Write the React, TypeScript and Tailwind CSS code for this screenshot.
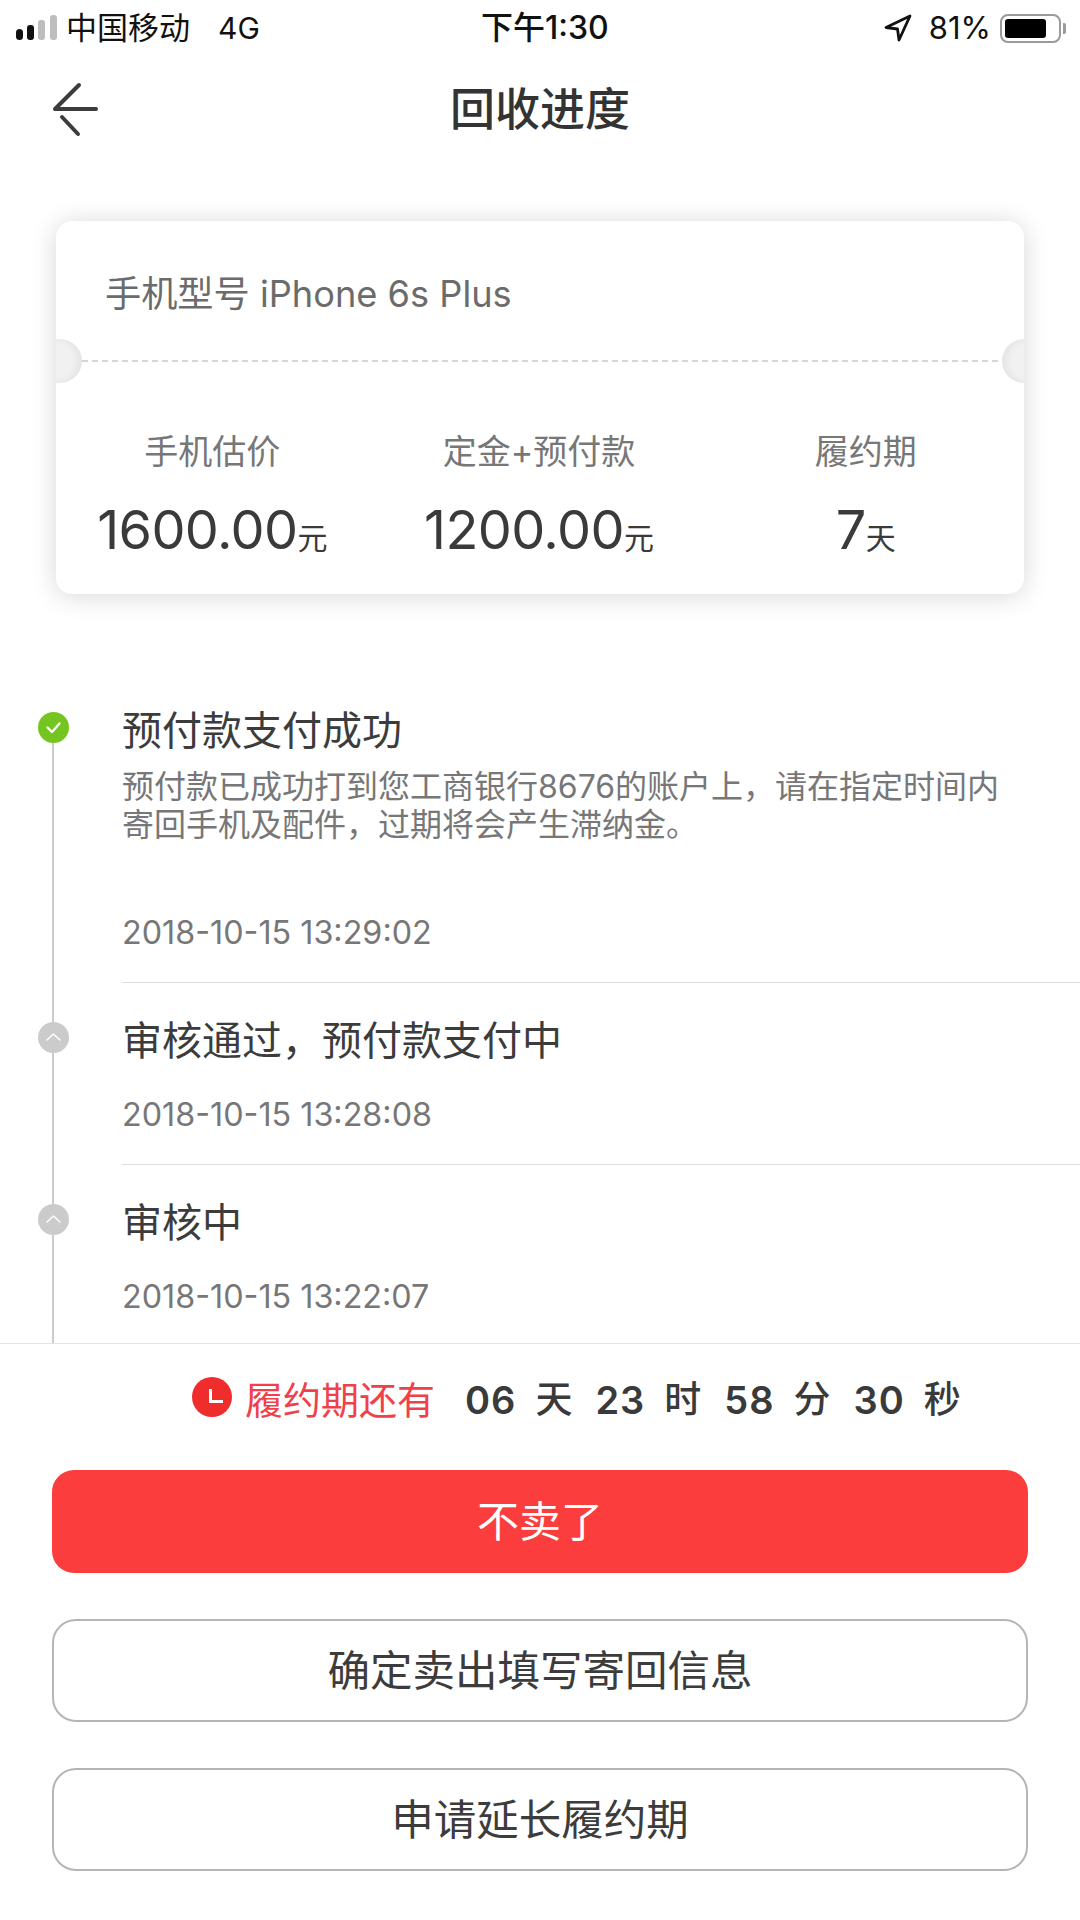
const font = { fontFamily: '"Inter", "Noto Sans CJK SC", sans-serif' };

function Stat({ label, value, unit }: { label: string; value: string; unit: string }) {
  return (
    <div className="flex flex-col items-center">
      <div className="text-[34px] leading-[40px] text-[#777777]">{label}</div>
      <div className="mt-[27px] flex items-baseline text-[#3a3a3a] h-[62px]">
        <span className="text-[54px] leading-[62px] tracking-[-0.6px]">{value}</span>
        <span className="text-[30px] leading-[62px]">{unit}</span>
      </div>
    </div>
  );
}

function Item({ done, title, desc, time, last }: { done?: boolean; title: string; desc?: string[]; time: string; last?: boolean }) {
  return (
    <div className="relative pl-[122px]">
      <div className="absolute left-[52px] top-[13px] bottom-[-39px] w-[2px] bg-[#cccccc]" />
      <div className={`absolute left-[38px] top-0 w-[31px] h-[31px] rounded-full flex items-center justify-center ${done ? "bg-[#74c51f]" : "bg-[#cbcbcb]"}`}>
        <svg width="19" height="19" viewBox="0 0 19 19" fill="none" stroke="#ffffff" strokeWidth={done ? 2.4 : 1.5} strokeLinecap="round" strokeLinejoin="round">
          {done ? <path d="M3.5 9.5 L8 14 L15.5 5.5" /> : <path d="M3 12 L9.5 6 L16 12" />}
        </svg>
      </div>
      <div className={`flex flex-col ${last ? "" : "border-b border-[#dedede]"} ${done ? "h-[271px]" : "h-[143px]"}`}>
        <div className="text-[40px] leading-[48px] text-[#3c3c3c] -mt-[5px]">{title}</div>
        {desc && (
          <div className="mt-[13px] text-[32px] leading-[38px] text-[#777777]">
            {desc.map((d) => (
              <div key={d} className="whitespace-nowrap">{d}</div>
            ))}
          </div>
        )}
        <div className={`${desc ? "mt-[69px]" : "mt-[30px]"} text-[32.3px] leading-[40px] text-[#777777]`}>{time}</div>
      </div>
    </div>
  );
}

function Notch({ side }: { side: "l" | "r" }) {
  return (
    <div className={`absolute top-[118px] h-[44px] bg-[#f1f1f1] ${side === "l" ? "left-0 w-[26px] rounded-r-[22px] shadow-[inset_-5px_0_6px_rgba(0,0,0,0.05)]" : "right-0 w-[22px] rounded-l-[22px] shadow-[inset_5px_0_6px_rgba(0,0,0,0.05)]"}`} />
  );
}

function CountNum({ n, u }: { n: string; u: string }) {
  return (
    <>
      <span className="text-[38px] font-semibold text-[#3a3a3a] tracking-[1px]">{n}</span>
      <span className="text-[37px] font-medium text-[#3a3a3a] ml-[19px] mr-[23px]">{u}</span>
    </>
  );
}

export default function App() {
  return (
    <div className="w-[1080px] h-[1920px] bg-white flex flex-col overflow-hidden" style={font}>
      {/* Status bar */}
      <div className="h-[56px] flex items-center justify-between relative pl-[16px] pr-[19px] text-[#111111]">
        <div className="flex items-center">
          <svg width="42" height="26" viewBox="0 0 42 26" className="mr-[8px]">
            <rect x="0" y="14" width="7" height="11" rx="3.5" fill="#111" />
            <rect x="11" y="10" width="7" height="15" rx="3" fill="#111" />
            <rect x="22" y="5" width="7" height="20" rx="3" fill="#bdbdbd" />
            <rect x="34" y="0" width="7" height="25" rx="3" fill="#bdbdbd" />
          </svg>
          <span className="text-[31px] leading-[40px]">中国移动</span>
          <span className="text-[30px] leading-[40px] ml-[28px]">4G</span>
        </div>
        <div className="absolute left-[481px] top-[8px] text-[32px] leading-[40px] font-medium">下午1:30</div>
        <div className="flex items-center">
          <svg width="28" height="28" viewBox="0 0 28 28" fill="none" stroke="#111" strokeWidth="2.8" strokeLinejoin="round" className="mr-[17px]">
            <path d="M26 2 L2 13.5 L13.5 15 L15 26 Z" />
          </svg>
          <span className="text-[31px] leading-[40px] mr-[9px]">81%</span>
          <div className="relative w-[61px] h-[29px] border-[2px] border-[#9a9a9a] rounded-[8px] p-[3px]">
            <div className="h-full w-[80%] bg-black rounded-[3px]" />
            <div className="absolute right-[-7px] top-[7px] w-[3px] h-[11px] bg-[#9a9a9a] rounded-r-[2px]" />
          </div>
        </div>
      </div>

      {/* Nav */}
      <div className="h-[108px] relative flex items-center justify-center">
        <svg width="50" height="56" viewBox="0 0 50 56" fill="none" stroke="#3c3c3c" strokeWidth="4" strokeLinecap="round" strokeLinejoin="round" className="absolute left-[50px] top-[26px]">
          <path d="M29 3 L5 27 L46 27" />
          <path d="M12 35 L28 52" />
        </svg>
        <div className="text-[45px] leading-[56px] font-medium text-[#333333]">回收进度</div>
      </div>

      {/* Card */}
      <div className="mx-[56px] mt-[57px] h-[373px] bg-white rounded-[16px] relative shadow-[0_2px_26px_rgba(0,0,0,0.16)] overflow-hidden shrink-0">
        <div className="h-[139px] pl-[49px] pt-[49px] text-[36.2px] leading-[48px] text-[#6b6b6b]">手机型号 iPhone 6s Plus</div>
        <div className="border-t-2 border-dashed border-[#d6d6d6] mx-[26px]" />
        <Notch side="l" />
        <Notch side="r" />
        <div className="grid grid-cols-3 pt-[70px] -ml-[7px] -mr-[5px]">
          <Stat label="手机估价" value="1600.00" unit="元" />
          <Stat label="定金+预付款" value="1200.00" unit="元" />
          <Stat label="履约期" value="7" unit="天" />
        </div>
      </div>

      {/* Timeline */}
      <div className="flex-1 overflow-hidden pt-[118px]">
        <Item done title="预付款支付成功" desc={["预付款已成功打到您工商银行8676的账户上，请在指定时间内", "寄回手机及配件，过期将会产生滞纳金。"]} time="2018-10-15 13:29:02" />
        <div className="h-[39px]" />
        <Item title="审核通过，预付款支付中" time="2018-10-15 13:28:08" />
        <div className="h-[39px]" />
        <Item title="审核中" time="2018-10-15 13:22:07" last />
      </div>

      {/* Bottom panel */}
      <div className="h-[577px] shrink-0 border-t border-[#e4e4e4] bg-white px-[52px]">
        <div className="h-[126px] pb-[14px] flex items-center pl-[140px] whitespace-nowrap">
          <div className="w-[40px] h-[40px] rounded-full bg-[#f02d2d] relative mr-[13px] -mt-[6px] shrink-0">
            <div className="absolute left-[17px] top-[12px] w-[3px] h-[14px] bg-white" />
            <div className="absolute left-[17px] top-[23px] w-[14px] h-[3px] bg-white" />
          </div>
          <span className="text-[38px] text-[#f0414a] mr-[30px]">履约期还有</span>
          <CountNum n="06" u="天" />
          <CountNum n="23" u="时" />
          <CountNum n="58" u="分" />
          <CountNum n="30" u="秒" />
        </div>
        <div className="h-[103px] rounded-[22px] bg-[#fc3d3d] flex items-center justify-center text-[42px] text-white">不卖了</div>
        <div className="mt-[46px] h-[103px] rounded-[24px] border-2 border-[#b5b5b5] flex items-center justify-center text-[42.5px] text-[#3c3c3c]">确定卖出填写寄回信息</div>
        <div className="mt-[46px] h-[103px] rounded-[24px] border-2 border-[#b5b5b5] flex items-center justify-center text-[42.5px] text-[#3c3c3c]">申请延长履约期</div>
      </div>
    </div>
  );
}
